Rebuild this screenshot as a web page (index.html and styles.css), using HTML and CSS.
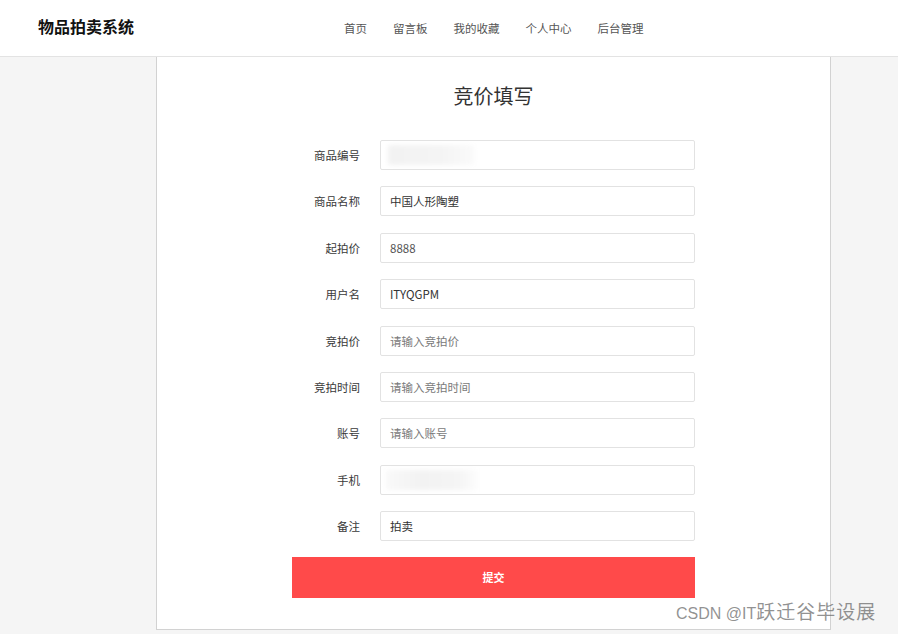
FILE: index.html
```html
<!DOCTYPE html>
<html lang="zh-CN">
<head>
<meta charset="utf-8">
<title>竞价填写</title>
<link rel="stylesheet" href="styles.css">
</head>
<body>
<header class="topbar">
  <div class="logo">物品拍卖系统</div>
  <nav class="nav">
    <a href="#">首页</a>
    <a href="#">留言板</a>
    <a href="#">我的收藏</a>
    <a href="#">个人中心</a>
    <a href="#">后台管理</a>
  </nav>
</header>
<main class="card">
  <h1 class="title">竞价填写</h1>
  <form class="form">
    <div class="row"><label>商品编号</label><div class="field"><span class="blur blur-a"></span></div></div>
    <div class="row"><label>商品名称</label><div class="field">中国人形陶塑</div></div>
    <div class="row"><label>起拍价</label><div class="field muted">8888</div></div>
    <div class="row"><label>用户名</label><div class="field">ITYQGPM</div></div>
    <div class="row"><label>竞拍价</label><div class="field placeholder">请输入竞拍价</div></div>
    <div class="row"><label>竞拍时间</label><div class="field placeholder">请输入竞拍时间</div></div>
    <div class="row"><label>账号</label><div class="field placeholder">请输入账号</div></div>
    <div class="row"><label>手机</label><div class="field"><span class="blur blur-b"></span></div></div>
    <div class="row"><label>备注</label><div class="field">拍卖</div></div>
    <button type="button" class="submit">提交</button>
  </form>
</main>
<div class="watermark">CSDN @IT<span class="wm-cjk">跃迁谷毕设展</span></div>
</body>
</html>
```
FILE: styles.css
```css
* { box-sizing: border-box; }
html, body { margin: 0; padding: 0; }
body {
  background: #f5f5f5;
  font-family: "Noto Sans CJK SC", "Noto Sans", sans-serif;
  color: #333;
  height: 634px;
  overflow: hidden;
  position: relative;
}
.topbar {
  height: 57px;
  background: #fff;
  border-bottom: 1px solid #e3e3e3;
  display: flex;
  align-items: center;
  padding-left: 38px;
}
.logo {
  font-size: 16px;
  font-weight: 700;
  color: #111;
  width: 100px;
  margin-top: -4px;
}
.nav {
  display: flex;
  gap: 26px;
  margin-left: 206px;
  margin-top: -1px;
}
.nav a {
  font-size: 11.5px;
  color: #555;
  text-decoration: none;
}
.card {
  margin-left: 156px;
  width: 675px;
  height: 573px;
  background: #fff;
  border: 1px solid #d2d2d2;
  border-top: none;
  padding-top: 24px;
}
.title {
  margin: 0;
  text-align: center;
  font-size: 20px;
  font-weight: 400;
  line-height: 30px;
  color: #333;
}
.form {
  width: 403px;
  margin: 29px auto 0;
  display: flex;
  flex-direction: column;
  gap: 16.4px;
}
.row {
  display: flex;
  align-items: center;
}
.row label {
  width: 68px;
  text-align: right;
  font-size: 11.5px;
  color: #3a3a3a;
  margin-right: 20px;
}
.field {
  width: 315px;
  height: 30px;
  border: 1px solid #e2e2e2;
  border-radius: 2px;
  padding-left: 9px;
  display: flex;
  align-items: center;
  font-size: 11.5px;
  color: #333;
}
.field.muted { color: #555; }
.field.placeholder { color: #7a7a7a; }
.blur {
  display: block;
  height: 20px;
  border-radius: 2px;
  filter: blur(2px);
}
.blur-a {
  width: 86px;
  margin-left: -2px;
  background: linear-gradient(90deg, #f2f2f2, #f4f4f4 60%, #fafafa);
}
.blur-b {
  width: 92px;
  margin-left: -4px;
  background: linear-gradient(90deg, #f9f9f9, #f2f2f2 40%, #f5f5f5 80%, #fdfdfd);
}
.submit {
  margin-top: -1px;
  height: 41px;
  width: 403px;
  border: none;
  background: #ff4a4a;
  color: #fff;
  font-family: inherit;
  font-size: 11px;
  font-weight: 700;
  cursor: pointer;
}
.watermark {
  position: absolute;
  left: 676px;
  top: 601px;
  font-family: "Liberation Sans", "Noto Sans CJK SC", sans-serif;
  font-size: 16px;
  line-height: 24px;
  color: rgba(110, 110, 110, 0.75);
  white-space: nowrap;
}
.wm-cjk {
  font-size: 19px;
  letter-spacing: 1px;
}
```
